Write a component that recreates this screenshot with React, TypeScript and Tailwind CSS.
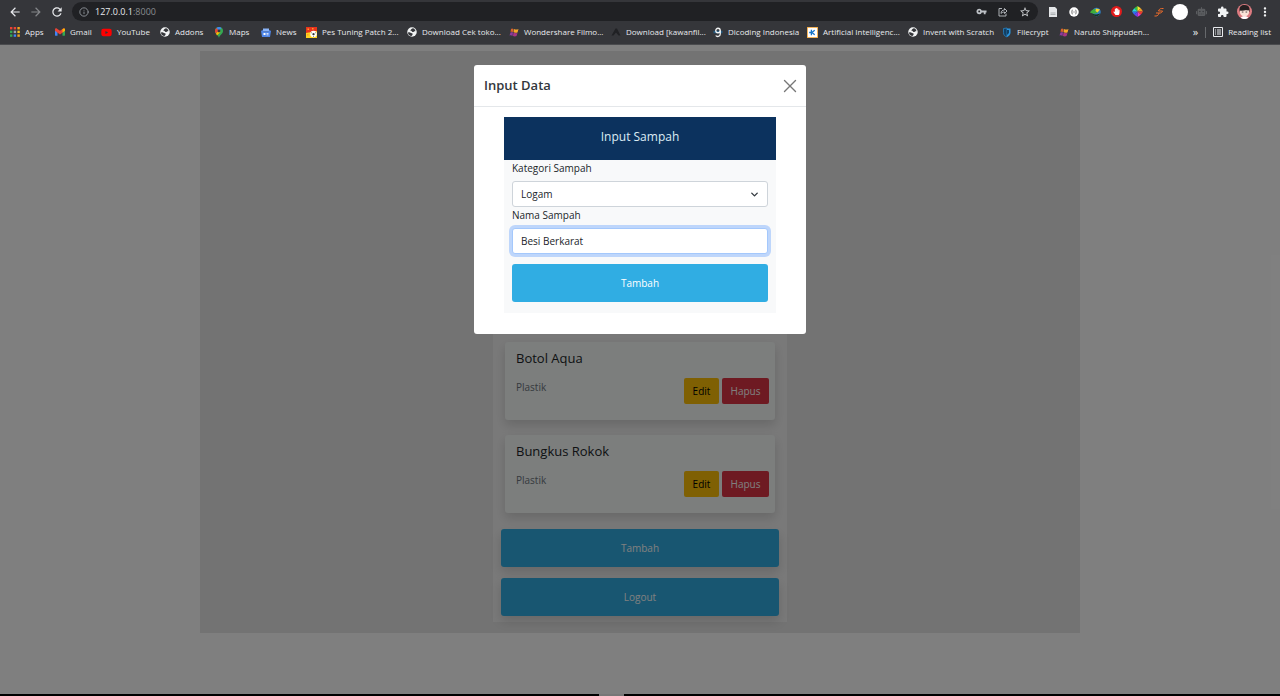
import React, { useState } from "react";
import { FaYoutube, FaRobot, FaHandPaper } from "react-icons/fa";
import {
  MdArrowBack,
  MdArrowForward,
  MdExtension,
  MdMoreVert,
  MdRefresh,
  MdStarBorder,
  MdVpnKey,
} from "react-icons/md";
import { Info, X, ChevronDown } from "lucide-react";

function AppsIcon() {
  const colors = ["#ea4335", "#ea4335", "#f4a51c", "#34a853", "#9aa0a6", "#f4c21c", "#34a853", "#4285f4", "#f4a51c"];
  return (
    <svg viewBox="0 0 10 10" className="size-[10px]">
      {colors.map((c, i) => (
        <rect key={i} x={(i % 3) * 3.7} y={Math.floor(i / 3) * 3.7} width="2.4" height="2.4" fill={c} />
      ))}
    </svg>
  );
}

function GmailIcon() {
  return (
    <svg viewBox="0 0 24 18" className="h-[8px] w-[10px]">
      <path d="M0 3v13a2 2 0 0 0 2 2h4V7z" fill="#4285f4" />
      <path d="M24 3v13a2 2 0 0 1-2 2h-4V7z" fill="#34a853" />
      <path d="M0 3c0-3 3-4 5-2l7 5 7-5c2-2 5-1 5 2v3l-12 9L0 6z" fill="#ea4335" />
      <path d="M18 2l2-1c2-1 4 0 4 2v3l-6 4z" fill="#fbbc04" />
    </svg>
  );
}

function GlobeIcon() {
  return (
    <svg viewBox="0 0 20 20" className="size-[10px]">
      <circle cx="10" cy="10" r="9.5" fill="#f1f3f4" />
      <path d="M2 11c2-1 4-1 6 1l3 1c1 2-1 4-2 5-4 0-7-3-7-7zM9 4c2-2 4-2 6 0l2 4c-1 1-2 0-3 1s-3 2-4 0-3-1-3-2 1-2 2-3z" fill="#35363a" />
    </svg>
  );
}

function MapsIcon() {
  return (
    <svg viewBox="0 0 16 22" className="h-[11px] w-[8px]">
      <path d="M8 22C7 16 0 14 0 8a8 8 0 0 1 16 0c0 6-7 8-8 14z" fill="#34a853" />
      <path d="M0 8a8 8 0 0 1 3-6l5 5-6 6Q0 11 0 8z" fill="#ea4335" />
      <path d="M3 2a8 8 0 0 1 10 0L8 7z" fill="#4285f4" />
      <path d="M2 13l6-6 3 3-7 7z" fill="#fbbc04" />
      <circle cx="8" cy="8" r="2.8" fill="#35363a" />
    </svg>
  );
}

function NewsIcon() {
  return (
    <svg viewBox="0 0 20 18" className="h-[9px] w-[10px]">
      <path d="M4 1h12v6H4z" fill="#8ab4f8" />
      <path d="M0 6l3-2 2 3h10l2-3 3 2-2 12H2z" fill="#4f86e8" />
      <path d="M5 10h4v4H5zM11 10h4v1.5h-4zM11 13h4v1.5h-4z" fill="#fff" />
    </svg>
  );
}

function PesIcon() {
  return (
    <svg viewBox="0 0 22 22" className="size-[11px]">
      <path d="M0 0h22v22H0z" fill="#ffd21f" />
      <path d="M0 0h22v8L0 12z" fill="#e8331c" />
      <path d="M3 3h3v3H3zM12 2h3v3h-3zM2 14h3v3H2z" fill="#ff9c2a" />
      <circle cx="15" cy="14" r="6.5" fill="#fff" />
      <path d="M15 12l2 2-1 2h-2l-1-2zM10 12l2-1M15 20v-2M20 12l-2-1" fill="#333" stroke="#333" />
    </svg>
  );
}

function FlagIcon() {
  return (
    <svg viewBox="0 0 20 20" className="size-[10px]">
      <path d="M4 4c2-2 3-1 5 0l-1 6c-2-1-4-1-5 0z" fill="#d9622b" />
      <path d="M10 4c3 1 5 2 9 0l-2 7c-3 1-5 1-8-1z" fill="#f5a52a" />
      <path d="M3 11c1-1 3-1 5 0l-1 7c-2-2-4-2-6-1z" fill="#8e3a9d" />
      <path d="M9 11c3 1 5 2 8 1l-2 6c-2 1-5 1-7 0z" fill="#a83686" />
    </svg>
  );
}

function PeakIcon() {
  return (
    <svg viewBox="0 0 20 20" className="size-[10px]">
      <path d="M9 3h3l7 14h-4l-5-6-5 6H1z" fill="#202124" />
    </svg>
  );
}

function DicodingIcon() {
  return (
    <svg viewBox="0 0 20 22" className="h-[11px] w-[10px]">
      <path d="M1 10h18" stroke="#255a80" strokeWidth="5" />
      <g fill="none" stroke="#f1f3f4" strokeWidth="2.6">
        <circle cx="10" cy="7" r="4.5" />
        <path d="M14.5 7v7c0 6-7 6-9 3" />
      </g>
    </svg>
  );
}

function KaggleIcon() {
  return (
    <svg viewBox="0 0 20 20" className="size-[11px]">
      <path d="M0 0h20v20H0z" fill="#f2a53a" />
      <path d="M1.5 1.5h17v17h-17z" fill="#fff" />
      <path d="M8 5v10M14 6l-5 4 5 4M4 10h5" stroke="#1473c8" strokeWidth="2.4" fill="none" />
    </svg>
  );
}

function ShieldIcon() {
  return (
    <svg viewBox="0 0 20 22" className="h-[11px] w-[10px]">
      <path d="M3 3l7-1v18C5 18 3 16 3 11z" fill="#123f63" stroke="#2586c9" strokeWidth="1.5" />
      <path d="M10 3h7v8c0 5-3 7-7 9z" fill="#2b93db" />
      <path d="M10 6h4v6l-4 4z" fill="#123f63" />
    </svg>
  );
}

const bookmarks = [
  { label: "Apps", icon: <AppsIcon />, width: "w-[45px]" },
  { label: "Gmail", icon: <GmailIcon />, width: "w-[47px]" },
  { label: "YouTube", icon: <FaYoutube className="size-[11px] text-[#ff0000]" />, width: "w-[58px]" },
  { label: "Addons", icon: <GlobeIcon />, width: "w-[54px]" },
  { label: "Maps", icon: <MapsIcon />, width: "w-[47px]" },
  { label: "News", icon: <NewsIcon />, width: "w-[46px]" },
  { label: "Pes Tuning Patch 2...", icon: <PesIcon />, width: "w-[100px]" },
  { label: "Download Cek toko...", icon: <GlobeIcon />, width: "w-[102px]" },
  { label: "Wondershare Filmo...", icon: <FlagIcon />, width: "w-[102px]" },
  { label: "Download [kawanfil...", icon: <PeakIcon />, width: "w-[102px]" },
  { label: "Dicoding Indonesia", icon: <DicodingIcon />, width: "w-[95px]" },
  { label: "Artificial Intelligenc...", icon: <KaggleIcon />, width: "w-[100px]" },
  { label: "Invent with Scratch", icon: <GlobeIcon />, width: "w-[94px]" },
  { label: "Filecrypt", icon: <ShieldIcon />, width: "w-[57px]" },
  { label: "Naruto Shippuden...", icon: <FlagIcon />, width: "w-[90px]" },
];

function ShareIcon() {
  return (
    <svg viewBox="0 0 20 20" className="size-[10px]" fill="none" stroke="#bdc1c6" strokeWidth="1.8">
      <path d="M8 3H2v15h14v-5" />
      <path d="M6 13c0-5 3-7 7-7V3l5 5-5 5v-3c-3 0-5 1-7 3z" />
    </svg>
  );
}

function Extensions() {
  return (
    <div className="grid w-[234px] grid-cols-11 place-items-center">
      <svg viewBox="0 0 20 20" className="size-[10px]">
        <path d="M2 0h12l4 4v16H2z" fill="#e4e6e8" />
        <path d="M5 15h10M5 12h10" stroke="#9a9da0" strokeWidth="1.5" />
      </svg>
      <svg viewBox="0 0 20 20" className="size-[10px]">
        <circle cx="10" cy="10" r="9.5" fill="#fff" />
        <path d="M7 6c-2 0 0 3-2 4 2 1 0 4 2 4M13 6c2 0 0 3 2 4-2 1 0 4-2 4M9 10h2" fill="none" stroke="#333" strokeWidth="1.5" />
      </svg>
      <svg viewBox="0 0 22 20" className="h-[10px] w-[11px]">
        <circle cx="13" cy="10" r="8.5" fill="#2f7fc4" />
        <path d="M0 11c3-5 7-8 12-7l-2 4 6 3c-5 3-11 3-16 0z" fill="#3fae3a" />
        <path d="M4 13c5 2 12 3 17-1-2 7-12 9-17 1z" fill="#16351f" />
        <path d="M12 3l8 2-5 6-4-3z" fill="#f6d62a" />
      </svg>
      <span className="flex size-[11px] items-center justify-center rounded-full bg-[#e21b1b]">
        <FaHandPaper className="size-[7px] text-white" />
      </span>
      <svg viewBox="0 0 20 20" className="size-[11px]">
        <path d="M10 10V0L4 4z" fill="#30c742" />
        <path d="M10 10V0l6 4z" fill="#f3e32e" />
        <path d="M10 10l6-6 4 6z" fill="#f19a28" />
        <path d="M10 10h10l-4 6z" fill="#ef3a30" />
        <path d="M10 10l6 6-6 4z" fill="#ec36c9" />
        <path d="M10 10v10l-6-4z" fill="#6c3cf0" />
        <path d="M10 10l-6 6-4-6z" fill="#2c6cf2" />
        <path d="M10 10H0l4-6z" fill="#27d5dd" />
      </svg>
      <svg viewBox="0 0 20 20" className="size-[10px]" fill="none" stroke="#ee6c2b" strokeWidth="2">
        <path d="M19 3h-4c-3 0-5 2-6 5h8c-1 3-3 4-5 4H4M1 18h3c3 0 5-2 6-6" />
      </svg>
      <span className="size-[16px] rounded-full bg-white" />
      <FaRobot className="size-[11px] text-[#5b5d60]" />
      <MdExtension className="size-[12px] text-[#f1f3f4]" />
      <svg viewBox="0 0 28 28" className="size-[15px]">
        <circle cx="14" cy="14" r="14" fill="#dd7b80" />
        <path d="M5 14C3 5 8 1 15 2c7 0 10 6 8 13z" fill="#242021" />
        <path d="M6 12l16-1c2 8-3 12-8 12S4 19 6 12z" fill="#fbe3d8" />
        <path d="M6 12l5-6 3 3 4-3 4 6-6-1-5 1z" fill="#242021" />
        <path d="M9 15h3M16 15h3" stroke="#333" strokeWidth="1.6" />
        <path d="M7 25c3-3 11-3 14 0-4 4-10 4-14 0z" fill="#fff" />
      </svg>
      <MdMoreVert className="size-[14px] text-[#f1f3f4]" />
    </div>
  );
}

function BrowserBar() {
  return (
    <header className="border-b border-[#4a4b4e] bg-[#35363a] text-[#e8eaed]">
      <div className="flex h-[23px] items-center pr-1 pl-2">
        <div className="flex w-16 items-center gap-[7px]">
          <button aria-label="Back"><MdArrowBack className="size-[14px]" /></button>
          <button aria-label="Forward"><MdArrowForward className="size-[14px] text-[#85878a]" /></button>
          <button aria-label="Reload"><MdRefresh className="size-[14px]" /></button>
        </div>
        <div className="flex h-[19px] flex-1 items-center gap-[6px] rounded-full bg-[#202124] px-[7px]">
          <Info className="size-[10px] text-[#9aa0a6]" strokeWidth={2} />
          <span className="flex-1 text-[9px]">127.0.0.1<span className="text-[#8a8d91]">:8000</span></span>
          <div className="flex items-center gap-[11px]">
            <MdVpnKey className="size-[11px] text-[#bdc1c6]" />
            <ShareIcon />
            <MdStarBorder className="size-[12px] text-[#d0d3d6]" />
          </div>
        </div>
        <div className="pl-1"><Extensions /></div>
      </div>
      <nav className="flex h-[21px] items-center pr-[9px] pb-[3px] pl-[9px] text-[8px] whitespace-nowrap">
        {bookmarks.map((b) => (
          <a key={b.label} href="#" className={"flex shrink-0 items-center gap-[5px] " + b.width}>
            <span className="flex w-[11px] shrink-0 justify-center">{b.icon}</span>
            {b.label}
          </a>
        ))}
        <div className="ml-auto flex items-center gap-[7px]">
          <span className="text-[11px]">»</span>
          <span className="h-[11px] w-px bg-[#67696c]" />
          <a href="#" className="flex items-center gap-[5px]">
            <svg viewBox="0 0 20 20" className="size-[10px]" fill="none" stroke="#e8eaed" strokeWidth="2">
              <path d="M1 1h18v18H1zM4 6h2M8 6h8M4 10h2M8 10h8M4 14h2M8 14h8" />
            </svg>
            Reading list
          </a>
        </div>
      </nav>
    </header>
  );
}

const primaryButton =
  "flex h-[38px] w-full items-center justify-center rounded-[3px] bg-[#30ade3] text-[10px] text-white";

function WasteCard({ name, category }: { name: string; category: string }) {
  return (
    <article className="mx-1 rounded-[3px] bg-[#f8fcfa] px-[11px] pt-[7px] pb-4 shadow-[0_5px_11px_rgba(0,0,0,0.15)]">
      <h5 className="text-[13px] leading-[19px]">{name}</h5>
      <div className="-mr-[5px] flex items-end justify-between pt-[10px]">
        <p className="self-start text-[10px] leading-[18px] text-[#6c757d]">{category}</p>
        <div className="flex gap-[3px] text-[10px]">
          <button className="h-[26px] w-[35px] rounded-[2px] bg-[#ffc107] text-black">Edit</button>
          <button className="h-[26px] w-[47px] rounded-[2px] bg-[#dc3545] text-white">Hapus</button>
        </div>
      </div>
    </article>
  );
}

function InputModal() {
  const [category, setCategory] = useState("Logam");
  const [name, setName] = useState("Besi Berkarat");
  return (
    <div role="dialog" aria-labelledby="modal-title" className="w-[332px] rounded-[3px] bg-white">
      <div className="flex h-[42px] items-center justify-between border-b border-[#e4e7ea] pr-[5px] pl-[10px]">
        <h2 id="modal-title" className="text-[13px] font-semibold text-[#32373c]">Input Data</h2>
        <button aria-label="Close"><X className="size-[22px] text-[#777]" strokeWidth={1.5} /></button>
      </div>
      <div className="px-[30px] pt-[10px] pb-[21px]">
        <form className="bg-[#f8f9fa] pb-[11px]" onSubmit={(e) => e.preventDefault()}>
          <h3 className="flex h-[43px] items-center justify-center bg-[#0c325e] pb-1 text-[12px] text-[#dcecf5]">Input Sampah</h3>
          <div className="flex flex-col px-2 text-[10px]">
            <label htmlFor="category" className="mb-[5px] leading-4">Kategori Sampah</label>
            <div className="relative">
              <select
                id="category"
                value={category}
                onChange={(e) => setCategory(e.target.value)}
                className="h-[26px] w-full appearance-none rounded-[3px] border border-[#ced4da] bg-white px-2"
              >
                <option>Logam</option>
                <option>Plastik</option>
              </select>
              <ChevronDown className="pointer-events-none absolute top-2 right-2 size-[11px] text-[#343a40]" strokeWidth={3} />
            </div>
            <label htmlFor="name" className="mb-[5px] leading-4">Nama Sampah</label>
            <input
              id="name"
              value={name}
              onChange={(e) => setName(e.target.value)}
              className="h-[26px] rounded-[3px] border border-[#a4c8fc] bg-white px-2 ring-[3px] ring-[#bed6fb] outline-none"
            />
            <button type="submit" className={"mt-[10px] " + primaryButton}>Tambah</button>
          </div>
        </form>
      </div>
    </div>
  );
}

export default function App() {
  return (
    <div className="flex min-h-screen flex-col bg-white font-['Open_Sans','Noto_Sans',sans-serif] text-[#212529]">
      <BrowserBar />
      <div className="relative flex-1">
        <main className="mx-auto mt-[6px] flex w-[69%] max-w-[880px] min-w-[340px] justify-center bg-[#e6e6e6] pt-[31px] pb-[11px]">
          <section className="w-[294px] bg-[#f3f3f3] px-2 pt-[260px] pb-[6px]">
            <div className="flex flex-col gap-[15px]">
              <WasteCard name="Botol Aqua" category="Plastik" />
              <WasteCard name="Bungkus Rokok" category="Plastik" />
            </div>
            <div className="mt-4 flex flex-col gap-[11px]">
              <button className={"shadow-[0_5px_11px_rgba(0,0,0,0.15)] " + primaryButton}>Tambah</button>
              <button className={"shadow-[0_5px_11px_rgba(0,0,0,0.15)] " + primaryButton}>Logout</button>
            </div>
          </section>
        </main>
        <div className="absolute inset-0 flex items-start justify-center bg-black/50 pt-5">
          <InputModal />
        </div>
      </div>
      <footer className="flex h-[2px] justify-center bg-black pr-[58px]">
        <span className="w-[25px] bg-[#777]" />
      </footer>
    </div>
  );
}
